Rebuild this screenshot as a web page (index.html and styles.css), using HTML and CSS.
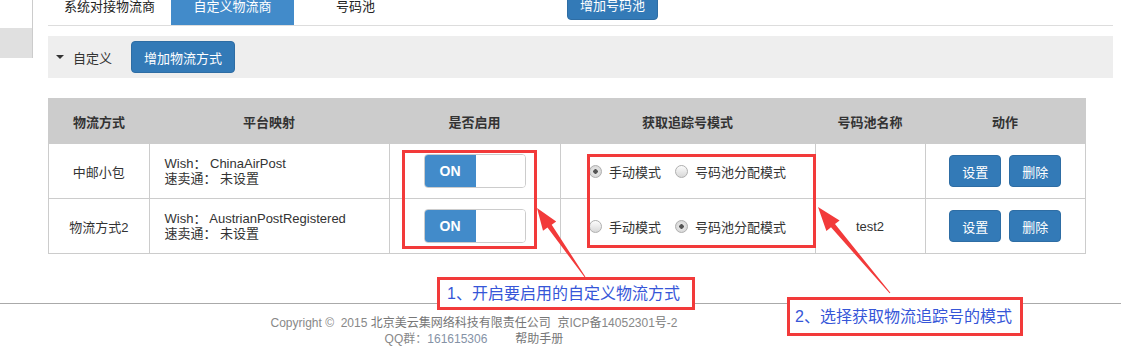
FILE: index.html
```html
<!DOCTYPE html>
<html lang="zh-CN">
<head>
    <meta charset="UTF-8">
    <title>自定义物流商</title>
    <link rel="stylesheet" href="styles.css">
</head>
<body>
<div class="page">
    <div class="layout">
        <!-- Side menu (scrolled) -->
        <aside class="sidebar">
            <div class="side-item"></div>
        </aside>
        <div class="content">
            <!-- Tabs -->
            <div class="tabs">
                <a class="tab">系统对接物流商</a>
                <a class="tab active">自定义物流商</a>
                <a class="tab">号码池</a>
                <button class="btn btn-pool">增加号码池</button>
            </div>
            <!-- Group bar -->
            <div class="group-bar">
                <span class="caret"></span>
                <span class="group-name">自定义</span>
                <button class="btn btn-add">增加物流方式</button>
            </div>
            <!-- Shipping methods -->
            <table class="ship-table">
                <thead>
                    <tr>
                        <th class="col-name">物流方式</th>
                        <th class="col-map">平台映射</th>
                        <th class="col-on">是否启用</th>
                        <th class="col-mode">获取追踪号模式</th>
                        <th class="col-pool">号码池名称</th>
                        <th class="col-act">动作</th>
                    </tr>
                </thead>
                <tbody>
                    <tr>
                        <td>中邮小包</td>
                        <td class="map">Wish： ChinaAirPost<br>速卖通： 未设置</td>
                        <td><div class="switch"><span class="switch-on">ON</span><span class="switch-off"></span></div></td>
                        <td>
                            <div class="radios">
                                <span class="radio checked"></span><span class="radio-label">手动模式</span>
                                <span class="radio"></span><span class="radio-label">号码池分配模式</span>
                            </div>
                        </td>
                        <td></td>
                        <td><div class="actions"><button class="btn btn-sm">设置</button><button class="btn btn-sm">删除</button></div></td>
                    </tr>
                    <tr>
                        <td>物流方式2</td>
                        <td class="map">Wish： AustrianPostRegistered<br>速卖通： 未设置</td>
                        <td><div class="switch"><span class="switch-on">ON</span><span class="switch-off"></span></div></td>
                        <td>
                            <div class="radios">
                                <span class="radio"></span><span class="radio-label">手动模式</span>
                                <span class="radio checked"></span><span class="radio-label">号码池分配模式</span>
                            </div>
                        </td>
                        <td>test2</td>
                        <td><div class="actions"><button class="btn btn-sm">设置</button><button class="btn btn-sm">删除</button></div></td>
                    </tr>
                </tbody>
            </table>
        </div>
    </div>
    <!-- Footer -->
    <footer class="footer">
        <div class="footer-inner">
            <div>Copyright ©&nbsp; 2015 <span class="dark">北京美云集网络科技有限责任公司</span>&nbsp; <span class="dark">京</span>ICP<span class="dark">备</span>14052301<span class="dark">号</span>-2</div>
            <div>QQ群：<span class="qq">161615306</span><span class="help">帮助手册</span></div>
        </div>
    </footer>
    <!-- Annotations -->
    <div class="mark mark-switch"></div>
    <div class="mark mark-mode"></div>
    <div class="note note-1">1、开启要启用的自定义物流方式</div>
    <div class="note note-2">2、选择获取物流追踪号的模式</div>
    <svg class="arrows" width="1121" height="353" viewBox="0 0 1121 353">
        <polygon fill="#f23a3a" points="537,208 556.2,221.5 551.7,224.7 585.4,276.7 584.6,277.3 547.5,227.5 543,230.7"/>
        <polygon fill="#f23a3a" points="818,207 839.6,220.4 835,224.1 890.4,292.7 889.6,293.3 831,227.3 826.4,231"/>
    </svg>
</div>
</body>
</html>
```

FILE: styles.css
```css
/* Global */
body {
    margin: 0;
    font-family: "Liberation Sans", "Noto Sans CJK SC", sans-serif;
    font-size: 13px;
    color: #333;
    background-color: #fff;
}
.page {
    position: relative;
    width: 1121px;
    height: 353px;
    overflow: hidden;
}
.layout {
    display: flex;
    align-items: flex-start;
}
/* Sidebar */
.sidebar {
    width: 32px;
    height: 58px;
    border-right: 1px solid #ccc;
    display: flex;
    flex-direction: column;
    justify-content: flex-end;
}
.side-item {
    height: 30px;
    background-color: #e0e0e0;
}
.content {
    margin-left: 15px;
    width: 1065px;
}
/* Buttons */
.btn {
    font-family: inherit;
    font-size: 13px;
    color: #fff;
    background-color: #337ab7;
    border: 1px solid #2e6da4;
    border-radius: 4px;
    height: 32px;
    padding: 0;
    cursor: pointer;
}
/* Tabs */
.tabs {
    display: flex;
    align-items: flex-start;
    height: 25px;
    border-bottom: 1px solid #ddd;
}
.tab {
    width: 123px;
    height: 25px;
    line-height: 13px;
    text-align: center;
    color: #222;
}
.tab.active {
    background-color: #428bca;
    color: #fff;
}
.btn-pool {
    width: 91px;
    margin-top: -12px;
    margin-left: 150px;
}
/* Group bar */
.group-bar {
    margin-top: 10px;
    height: 42px;
    background-color: #eee;
    display: flex;
    align-items: center;
    padding-left: 8px;
}
.caret {
    width: 0;
    height: 0;
    border-top: 4px solid #333;
    border-left: 4px solid transparent;
    border-right: 4px solid transparent;
    margin-right: 9px;
}
.group-name {
    color: #333;
}
.btn-add {
    width: 104px;
    margin-left: 19px;
}
/* Table */
.ship-table {
    margin-top: 20px;
    width: 1038px;
    border-collapse: collapse;
    border: 1px solid #ccc;
    table-layout: fixed;
}
.ship-table thead tr {
    height: 45px;
    background-color: #ccc;
}
.ship-table th {
    font-weight: bold;
    color: #333;
    padding: 0;
}
.ship-table tbody tr {
    height: 55px;
}
.ship-table td {
    border: 1px solid #ccc;
    text-align: center;
    padding: 0;
}
.col-name { width: 100px; }
.col-map { width: 240px; }
.col-on { width: 171px; }
.col-mode { width: 255px; }
.col-pool { width: 110px; }
.ship-table td.map {
    text-align: left;
    padding-left: 15px;
    line-height: 15px;
}
/* Switch */
.switch {
    display: inline-flex;
    width: 100px;
    height: 32px;
    border: 1px solid #ccc;
    border-radius: 4px;
    overflow: hidden;
    vertical-align: middle;
}
.switch-on {
    width: 51px;
    background-color: #428bca;
    color: #fff;
    font-weight: bold;
    font-size: 14px;
    line-height: 32px;
    text-align: center;
}
.switch-off {
    flex: 1;
    background-color: #fff;
}
/* Radios */
.radios {
    display: inline-flex;
    align-items: center;
}
.radio {
    width: 11px;
    height: 11px;
    border-radius: 50%;
    border: 1px solid #b0b0b0;
    background: linear-gradient(#fcfcfc, #d8d8d8);
    margin-right: 7px;
}
.radio.checked {
    background: radial-gradient(circle, #555 0, #555 2px, #e4e4e4 2.5px, #d0d0d0 100%);
}
.radio-label {
    margin-right: 14px;
}
.radio-label:last-child {
    margin-right: 0;
}
/* Actions */
.actions {
    display: flex;
    justify-content: center;
    gap: 8px;
}
.btn-sm {
    width: 52px;
}
/* Footer */
.footer {
    margin-top: 49px;
    border-top: 1px solid #aaa;
}
.footer-inner {
    width: 948px;
    text-align: center;
    padding-top: 11px;
    font-size: 12px;
    line-height: 16px;
    color: #888;
}
.footer-inner .dark {
    color: #777;
}
.qq {
    color: #8592a6;
}
.help {
    margin-left: 28px;
    color: #777;
}
/* Annotations */
.mark {
    position: absolute;
    border: 3px solid #f23a3a;
}
.mark-switch {
    left: 402px;
    top: 150px;
    width: 129px;
    height: 93px;
}
.mark-mode {
    left: 587px;
    top: 154px;
    width: 223px;
    height: 88px;
}
.note {
    position: absolute;
    border: 3px solid #f23a3a;
    background-color: #fff;
    color: #3656d8;
    font-size: 16px;
}
.note-1 {
    left: 437px;
    top: 277px;
    width: 245px;
    height: 27px;
    line-height: 27px;
    padding-left: 7px;
}
.note-2 {
    left: 787px;
    top: 297px;
    width: 225px;
    height: 33px;
    line-height: 33px;
    padding-left: 5px;
}
.arrows {
    position: absolute;
    left: 0;
    top: 0;
    pointer-events: none;
}
```
